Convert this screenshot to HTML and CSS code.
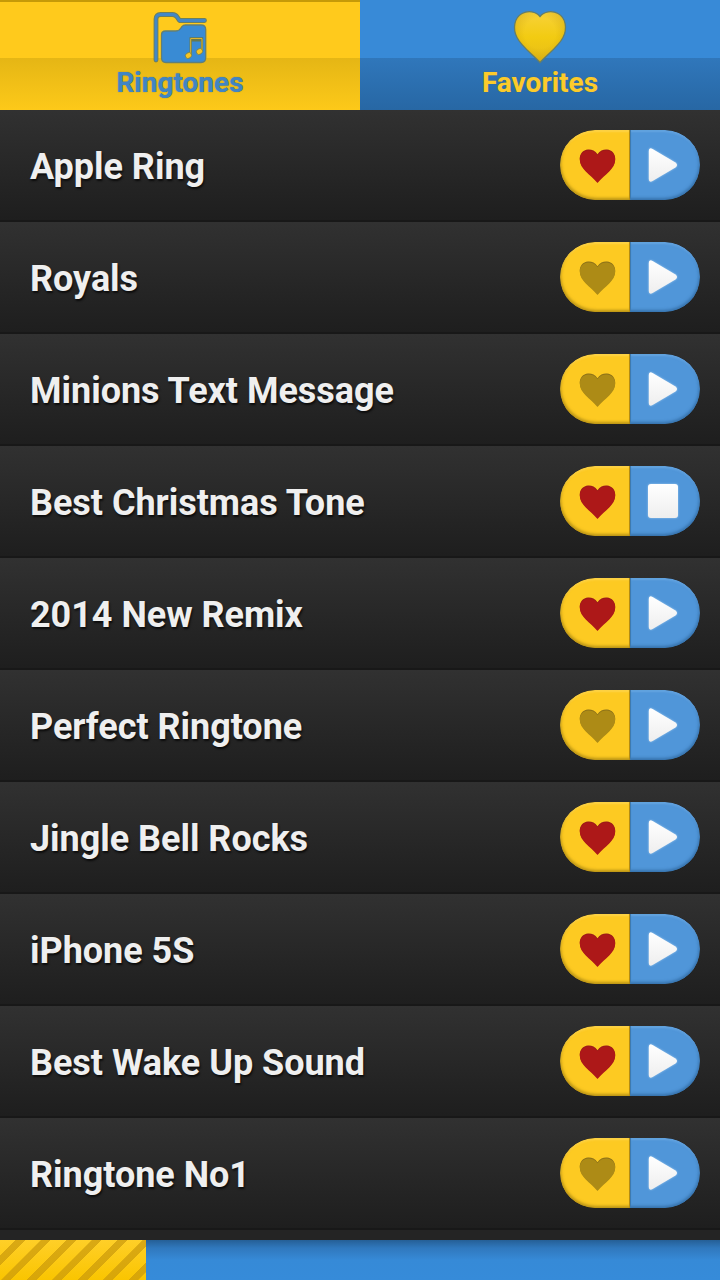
FILE: index.html
```html
<!DOCTYPE html>
<html lang="en">
<head>
<meta charset="utf-8">
<title>Ringtones</title>
<link rel="stylesheet" href="styles.css">
</head>
<body>
<svg class="defs" width="0" height="0" aria-hidden="true">
  <defs>
    <linearGradient id="white" x1="0" y1="0" x2="0" y2="1"><stop offset="0" stop-color="#fff"/><stop offset="1" stop-color="#eee"/></linearGradient>
    <linearGradient id="gold" x1="0" y1="0" x2="0" y2="1"><stop offset="0" stop-color="#f8d23a"/><stop offset=".5" stop-color="#f2cb12"/><stop offset="1" stop-color="#e6bc18"/></linearGradient>
    <radialGradient id="shade" cx=".5" cy=".42" r=".6"><stop offset=".5" stop-color="#a87f00" stop-opacity="0"/><stop offset="1" stop-color="#a87f00" stop-opacity=".3"/></radialGradient>
    <symbol id="heart" viewBox="0 0 36 34"><path d="M18 5.200C20.500 1.200 24 .3 27.500 .5C32.500 .9 36 5 35.700 10C35.400 14.500 33.500 17.500 30 21.200C26 25.400 21.500 28.500 18 33C14.500 28.500 10 25.400 6 21.200C2.500 17.500 .6 14.500 .3 10C0 5 3.500 .9 8.500 .5C12 .3 15.500 1.200 18 5.200Z"/></symbol>
    <symbol id="play" viewBox="0 0 32 36"><path d="M1.800 4Q1.800 .2 5.600 1.900L28.500 15.600Q31.600 18 28.500 20.400L5.600 34.100Q1.800 35.800 1.800 32Z" fill="url(#white)"/></symbol>
    <symbol id="stop" viewBox="0 0 32 36"><rect x="1" y="1" width="30" height="34" rx="3" fill="url(#white)"/></symbol>
  </defs>
</svg>
<main class="app">
  <nav class="tabs">
    <a class="tab tab-active">
      <svg class="tab-icon" viewBox="-.5 -1 56 54">
        <path d="M3.500 48V7Q3.500 2.500 8 2.500H20Q23 2.500 25 5.500L27 8.500H52" fill="none" stroke="#6c805f" stroke-width="4.800" stroke-linecap="round" stroke-linejoin="round"/>
        <path d="M3.500 48V7Q3.500 2.500 8 2.500H20Q23 2.500 25 5.500L27 8.500H52" fill="none" stroke="#4387c6" stroke-width="2.800" stroke-linecap="round" stroke-linejoin="round"/>
        <path d="M13 19H23Q26.500 19 28 16.500L29.500 14.500Q30.500 13 33 13H48.500Q53.200 13 53.200 17.500V45.500Q53.200 50.500 48.500 50.500H13.500Q9 50.500 9 45.500V23Q9 19 13 19Z" fill="#398bd4" stroke="#607f78" stroke-width="1.300"/>
        <path d="M38.200 43V26.500H49.500V39.500" fill="none" stroke="#67794f" stroke-width="2.300"/>
        <path d="M38.200 28.200H49.500" fill="none" stroke="#67794f" stroke-width="2.600"/>
        <path d="M38.200 43V26.500H49.500V39.500" fill="none" stroke="#e0b52d" stroke-width="1"/>
        <g fill="#f9c522" stroke="#67794f" stroke-width=".7"><ellipse cx="36" cy="43.500" rx="3.300" ry="2.800" transform="rotate(-35 36 43.500)"/><ellipse cx="47" cy="39.500" rx="3.300" ry="2.800" transform="rotate(-35 47 39.500)"/></g>
      </svg>
      <span class="tab-label">Ringtones</span>
    </a>
    <a class="tab tab-blue">
      <svg class="tab-icon" viewBox="0 0 56 54">
        <path d="M28 5.500C32 .3 40 -.8 46 2.500C54 7 55.500 17.500 51 26.500C46.500 35.500 36 43 28 51.500C20 43 9.500 35.500 5 26.500C.5 17.500 2 7 10 2.500C16 -.8 24 .3 28 5.500Z" fill="url(#gold)"/>
        <path d="M28 5.500C32 .3 40 -.8 46 2.500C54 7 55.500 17.500 51 26.500C46.500 35.500 36 43 28 51.500C20 43 9.500 35.500 5 26.500C.5 17.500 2 7 10 2.500C16 -.8 24 .3 28 5.500Z" fill="url(#shade)" stroke="#667e67" stroke-width="1.300"/>
      </svg>
      <span class="tab-label">Favorites</span>
    </a>
  </nav>
  <ul class="list">
    <li class="row"><span class="name">Apple Ring</span><span class="pill"><span class="fav on"><svg><use href="#heart"/></svg></span><span class="ctl"><svg><use href="#play"/></svg></span></span></li>
    <li class="row"><span class="name">Royals</span><span class="pill"><span class="fav"><svg><use href="#heart"/></svg></span><span class="ctl"><svg><use href="#play"/></svg></span></span></li>
    <li class="row"><span class="name">Minions Text Message</span><span class="pill"><span class="fav"><svg><use href="#heart"/></svg></span><span class="ctl"><svg><use href="#play"/></svg></span></span></li>
    <li class="row"><span class="name">Best Christmas Tone</span><span class="pill"><span class="fav on"><svg><use href="#heart"/></svg></span><span class="ctl"><svg><use href="#stop"/></svg></span></span></li>
    <li class="row"><span class="name">2014 New Remix</span><span class="pill"><span class="fav on"><svg><use href="#heart"/></svg></span><span class="ctl"><svg><use href="#play"/></svg></span></span></li>
    <li class="row"><span class="name">Perfect Ringtone</span><span class="pill"><span class="fav"><svg><use href="#heart"/></svg></span><span class="ctl"><svg><use href="#play"/></svg></span></span></li>
    <li class="row"><span class="name">Jingle Bell Rocks</span><span class="pill"><span class="fav on"><svg><use href="#heart"/></svg></span><span class="ctl"><svg><use href="#play"/></svg></span></span></li>
    <li class="row"><span class="name">iPhone 5S</span><span class="pill"><span class="fav on"><svg><use href="#heart"/></svg></span><span class="ctl"><svg><use href="#play"/></svg></span></span></li>
    <li class="row"><span class="name">Best Wake Up Sound</span><span class="pill"><span class="fav on"><svg><use href="#heart"/></svg></span><span class="ctl"><svg><use href="#play"/></svg></span></span></li>
    <li class="row"><span class="name">Ringtone No1</span><span class="pill"><span class="fav"><svg><use href="#heart"/></svg></span><span class="ctl"><svg><use href="#play"/></svg></span></span></li>
  </ul>
  <div class="progress"><div class="progress-fill"></div></div>
</main>
</body>
</html>
```
FILE: styles.css
```css
* { box-sizing: border-box; }
body { margin: 0; background: #222; font-family: Roboto, "Liberation Sans", sans-serif; }
.defs { position: absolute; }
.app { width: 720px; height: 1280px; display: flex; flex-direction: column; overflow: hidden; }
.tabs { display: flex; height: 110px; flex: none; }
.tab { flex: 1; display: flex; flex-direction: column; align-items: center; padding-top: 11px; }
.tab-active { background: linear-gradient(#c69a08 0 2px, #ffca1c 2px 58px, #e5b615 58px, #fdc919 110px); color: #4185c4; }
.tab-blue { background: linear-gradient(#388ad7 0 58px, #3077bb 58px, #2767a4 110px); color: #fccb2b; }
.tab-icon { width: 56px; height: 54px; flex: none; overflow: visible; }
.tab-label { font-size: 28px; line-height: 34px; font-weight: 700; margin-top: 1px; text-shadow: 0 0 1px #526e64; }
.list { list-style: none; margin: 0; padding: 0; flex: 1; overflow: hidden; background: #242424; }
.row { height: 112px; display: flex; align-items: center; justify-content: space-between; padding: 0 20px 0 30px; border-bottom: 2px solid #181818; background: linear-gradient(#313131, #1e1e1e); }
.name { font-size: 36px; line-height: 44px; font-weight: 700; letter-spacing: -.03px; color: #efefef; text-shadow: 1px 2px 2px #0c0c0c; white-space: nowrap; padding-top: 4px; }
.pill { display: flex; width: 140px; height: 70px; border-radius: 35px; overflow: hidden; }
.fav, .ctl { display: flex; width: 70px; height: 70px; align-items: center; }
.fav { border-radius: 35px 0 0 35px; background: #fdca22; padding-left: 19px; box-shadow: inset -1px 0 0 #b58c12, inset 1px -2px 3px #9a7a10b0, inset 0 2px 2px #ffdc6988; }
.ctl { border-radius: 0 35px 35px 0; background: #5096d9; padding-left: 17px; box-shadow: inset 1px 0 0 #3e7aaf, inset -1px -2px 3px #285e92a0, inset 0 2px 2px #78b2e988; }
.fav svg { width: 37px; height: 34px; fill: #ad8b16; filter: drop-shadow(0 -.5px .5px #8b7019); margin-top: 3px; }
.fav.on svg { fill: #ad1818; filter: drop-shadow(0 -.5px .5px #991c19); }
.ctl svg { width: 32px; height: 36px; filter: drop-shadow(0 0 1px #9cc7ed); }
.progress { height: 40px; flex: none; background: linear-gradient(#255f96, #3078bd 8px, #368ad7 20px, #368bd9); }
.progress-fill { width: 146px; height: 40px; background: repeating-linear-gradient(135deg, transparent 0 10.8px, #c9980bb0 11.2px 17.8px, transparent 18px), linear-gradient(#ffcf28, #fac500); }
```
